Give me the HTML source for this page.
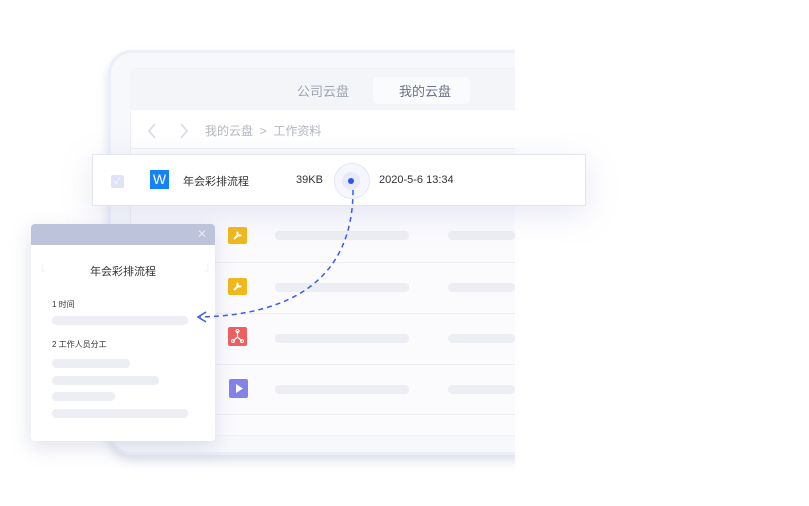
<!DOCTYPE html><html><head><meta charset="utf-8"><style>
body{margin:0;width:809px;height:506px;background:#fff;position:relative;overflow:hidden;font-family:"Liberation Sans","Noto Sans CJK SC",sans-serif}
.a{position:absolute}
.bar{position:absolute;height:9px;border-radius:4px;background:#eceef3}
.line{position:absolute;left:130px;width:385px;height:1px;background:#eceef4}
</style></head><body>
<div class="a" style="left:108px;top:50px;width:430px;height:399px;border-radius:24px;background:#f7f8fc;border:3px solid #eceef8;box-shadow:0 6px 10px rgba(150,155,190,.3)"></div>
<div class="a" style="left:130px;top:68px;width:400px;height:366px;border-radius:10px;background:#fbfbfe;border:1px solid #eef0f6"></div>
<div class="a" style="left:130px;top:69px;width:400px;height:41px;background:#f4f5f9;border-radius:10px 10px 0 0"></div>
<div class="a" style="left:297px;top:81px;font-size:13px;color:#a0a4b2">公司云盘</div>
<div class="a" style="left:373px;top:77px;width:97px;height:27px;border-radius:5px;background:#fafbfd"></div>
<div class="a" style="left:399px;top:81px;font-size:13px;color:#6d7185">我的云盘</div>
<div class="a" style="left:131px;top:110px;width:400px;height:38px;background:#fff"></div>
<svg class="a" style="left:145px;top:122px" width="50" height="18"><path d="M10 2 4 9 10 16M36 2 42 9 36 16" stroke="#d8dae2" stroke-width="1.5" fill="none"/></svg>
<div class="a" style="left:205px;top:122px;font-size:12px;color:#b4b7c2">我的云盘 &nbsp;&gt;&nbsp; 工作资料</div>
<div class="line" style="top:148px"></div>
<div class="line" style="top:262px"></div><div class="line" style="top:313px"></div><div class="line" style="top:364px"></div><div class="line" style="top:414px"></div>
<div class="a" style="left:228px;top:227px;width:19px;height:17px;background:#f1b81a;border-radius:2px"></div>
<div class="a" style="left:228px;top:278px;width:19px;height:17px;background:#f1b81a;border-radius:2px"></div>
<svg class="a" style="left:228px;top:227px" width="19" height="17"><path d="M6 12 11 7M10 5a2 2 0 1 0 3 3" stroke="#fff" stroke-width="2" fill="none"/></svg>
<svg class="a" style="left:228px;top:278px" width="19" height="17"><path d="M6 12 11 7M10 5a2 2 0 1 0 3 3" stroke="#fff" stroke-width="2" fill="none"/></svg>
<div class="a" style="left:228px;top:327px;width:19px;height:19px;background:#ee5f5f;border-radius:2px"></div>
<svg class="a" style="left:228px;top:327px" width="19" height="19"><path d="M9.5 4 9.5 10 5 14M9.5 10 14 14" stroke="#fff" stroke-width="1.2" fill="none"/><circle cx="9.5" cy="4" r="1.5" fill="none" stroke="#fff"/><circle cx="5" cy="14" r="1.5" fill="none" stroke="#fff"/><circle cx="14" cy="14" r="1.5" fill="none" stroke="#fff"/></svg>
<div class="a" style="left:229px;top:379px;width:19px;height:19px;background:#8282e8;border-radius:2px"></div>
<svg class="a" style="left:229px;top:379px" width="19" height="19"><path d="M7 5 14 9.5 7 14Z" fill="#fff"/></svg>
<div class="bar" style="left:275px;top:231px;width:134px"></div><div class="bar" style="left:448px;top:231px;width:67px"></div>
<div class="bar" style="left:275px;top:283px;width:134px"></div><div class="bar" style="left:448px;top:283px;width:67px"></div>
<div class="bar" style="left:275px;top:334px;width:134px"></div><div class="bar" style="left:448px;top:334px;width:67px"></div>
<div class="bar" style="left:275px;top:385px;width:134px"></div><div class="bar" style="left:448px;top:385px;width:67px"></div>
<div class="a" style="left:515px;top:0;width:294px;height:506px;background:#fff"></div>
<div class="a" style="left:92px;top:154px;width:492px;height:50px;background:#fff;border:1px solid #e3e5ef;box-shadow:0 8px 30px rgba(160,165,210,.25)"></div>
<div class="a" style="left:111px;top:175px;width:13px;height:13px;background:#dfe3f7;border-radius:2px;color:#fff;font-size:9px;text-align:center;line-height:13px">✓</div>
<div class="a" style="left:150px;top:170px;width:19px;height:19px;background:#1582f5;color:#fff;font-size:14px;text-align:center;line-height:19px">W</div>
<div class="a" style="left:183px;top:173px;font-size:11px;color:#333">年会彩排流程</div>
<div class="a" style="left:296px;top:174px;font-size:11px;color:#333">39KB</div>
<div class="a" style="left:334px;top:163px;width:34px;height:34px;border-radius:50%;background:#f6f7fe;border:1px solid #e3e6f6"></div>
<div class="a" style="left:342px;top:172px;width:18px;height:18px;border-radius:50%;background:#e6eafb"></div>
<div class="a" style="left:348px;top:178px;width:6px;height:6px;border-radius:50%;background:#2f55ec"></div>
<div class="a" style="left:379px;top:174px;font-size:11px;color:#333">2020-5-6 13:34</div>
<div class="a" style="left:31px;top:224px;width:184px;height:217px;background:#fff;border-radius:4px;box-shadow:0 6px 20px rgba(150,155,190,.3);overflow:hidden">
<div style="height:21px;background:#bec3dc;color:#e4e6f0;font-size:12px;text-align:right;padding-right:8px;line-height:21px">✕</div></div>
<svg class="a" style="left:0;top:0" width="809" height="506"><path d="M353 190 C353 280 290 315 200 317" stroke="#3a5cf0" stroke-width="1.5" stroke-dasharray="5 4" fill="none"/><path d="M206 312 198 317 206 322" stroke="#3a5cf0" stroke-width="1.5" fill="none"/><path d="M42 263v8h4M208 263v8h-4" stroke="#eef0f4" stroke-width="1" fill="none"/></svg>
<div class="a" style="left:90px;top:263px;font-size:11px;color:#333">年会彩排流程</div>
<div class="a" style="left:52px;top:299px;font-size:8px;color:#333">1 时间</div>
<div class="bar" style="left:52px;top:316px;width:136px"></div>
<div class="a" style="left:52px;top:339px;font-size:8px;color:#333">2 工作人员分工</div>
<div class="bar" style="left:52px;top:359px;width:78px"></div>
<div class="bar" style="left:52px;top:376px;width:107px"></div>
<div class="bar" style="left:52px;top:392px;width:63px"></div>
<div class="bar" style="left:52px;top:409px;width:136px"></div>
</body></html>
